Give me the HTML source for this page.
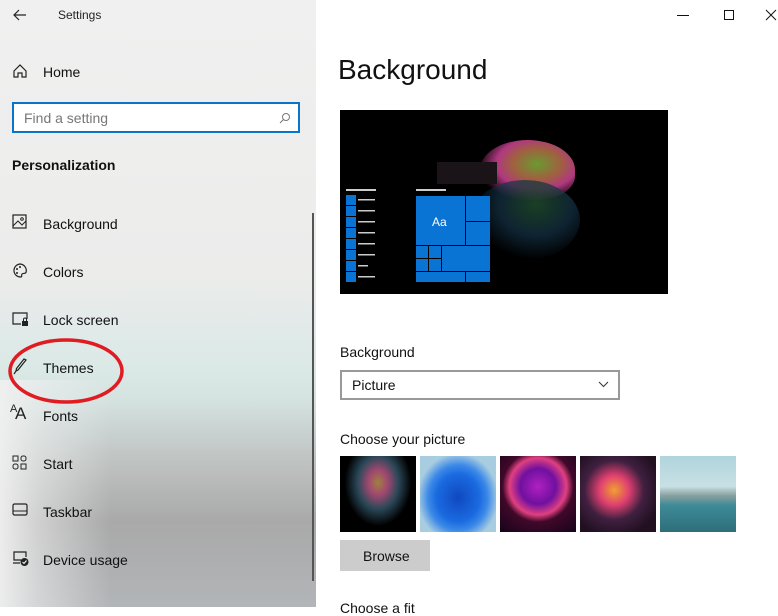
<!DOCTYPE html>
<html><head><style>
*{margin:0;padding:0;box-sizing:border-box}
body{width:778px;height:607px;overflow:hidden;font-family:"Liberation Sans",sans-serif;background:#fff;position:relative;color:#000}
.abs{position:absolute}
#left{left:0;top:0;width:316px;height:607px;overflow:hidden;
background:linear-gradient(180deg,#f0f0f0 0%,#ececeb 45%,#dbe9e7 60%,#d4e2e0 66%,#bfc3c2 76%,#a9a9a9 86%,#b2b5b8 100%)}
#leftov{left:0;top:380px;width:316px;height:227px;background:linear-gradient(90deg,rgba(240,240,240,.95) 0%,rgba(240,240,240,.55) 12%,rgba(240,240,240,0) 35%)}
.nav{position:absolute;left:43px;font-size:14px;color:#111}
.ic{position:absolute;left:12px}
.t{font-size:14px;color:#111}
</style></head><body>
<div id="left" class="abs">
<div id="leftov" class="abs"></div>
<svg class="abs" style="left:12px;top:8px" width="16" height="14"><path d="M14 7H2M7 2L2 7l5 5" stroke="#222" fill="none" stroke-width="1.2"/></svg>
<div class="abs" style="left:58px;top:8px;font-size:12px;color:#222">Settings</div>
<svg class="ic" style="top:63px" width="16" height="16"><path d="M2 8L8 2l6 6v6h-4V10H6v4H2z" stroke="#222" fill="none" stroke-width="1.2"/></svg>
<div class="nav" style="top:64px">Home</div>
<div class="abs" style="left:12px;top:102px;width:288px;height:31px;background:#fff;border:2px solid #0a74c8"></div>
<div class="abs" style="left:24px;top:110px;font-size:14px;color:#777">Find a setting</div>
<svg class="abs" style="left:279px;top:112px" width="12" height="12"><circle cx="7" cy="5" r="3.5" stroke="#777" fill="none"/><path d="M4.5 7.5L1 11" stroke="#777"/></svg>
<div class="abs" style="left:12px;top:157px;font-size:14px;font-weight:bold;color:#111">Personalization</div>
<svg class="ic" style="top:214px" width="16" height="16"><rect x="1" y="1" width="13" height="13" stroke="#222" fill="none" stroke-width="1.2"/><path d="M1 12l5-5 4 4 4-4" stroke="#222" fill="none"/><circle cx="10" cy="5" r="1.3" stroke="#222" fill="none"/></svg>
<div class="nav" style="top:216px">Background</div>
<svg class="ic" style="top:262px" width="17" height="17"><path d="M8 2a6.5 6.5 0 1 0 1 13c1.5-.5 0-2 1-3s3 0 4-1.5A6.6 6.6 0 0 0 8 2z" stroke="#222" fill="none" stroke-width="1.2"/><circle cx="5" cy="7" r="1" fill="#222"/><circle cx="8" cy="5" r="1" fill="#222"/><circle cx="5" cy="11" r="1" fill="#222"/></svg>
<div class="nav" style="top:264px">Colors</div>
<svg class="ic" style="top:311px" width="17" height="16"><path d="M9 13H1V2h14v6" stroke="#222" fill="none" stroke-width="1.2"/><rect x="10" y="10" width="6" height="5" fill="#222"/><path d="M11.5 10V8.5a1.5 1.5 0 0 1 3 0V10" stroke="#222" fill="none"/></svg>
<div class="nav" style="top:312px">Lock screen</div>
<svg class="ic" style="top:358px" width="16" height="18"><path d="M14 2L6 12l-2 1 .5-2.5L12 1z M4 13l-2 3" stroke="#222" fill="none" stroke-width="1.2"/></svg>
<div class="nav" style="top:360px">Themes</div>
<div class="abs" style="left:10px;top:403px;font-size:11px;color:#222">A</div>
<div class="abs" style="left:15px;top:404px;font-size:17px;color:#222">A</div>
<div class="nav" style="top:408px">Fonts</div>
<svg class="ic" style="top:455px" width="16" height="16"><rect x="1" y="1" width="5" height="5" stroke="#222" fill="none"/><rect x="9" y="1" width="5" height="5" rx="2" stroke="#222" fill="none"/><rect x="1" y="9" width="5" height="5" rx="2" stroke="#222" fill="none"/><rect x="9" y="9" width="5" height="5" stroke="#222" fill="none"/></svg>
<div class="nav" style="top:456px">Start</div>
<svg class="ic" style="top:503px" width="16" height="14"><rect x="1" y="1" width="14" height="11" rx="1.5" stroke="#222" fill="none" stroke-width="1.2"/><path d="M1 8h14" stroke="#222"/></svg>
<div class="nav" style="top:504px">Taskbar</div>
<svg class="ic" style="top:550px" width="17" height="17"><path d="M9 10H2V2h12v5M1 13h7" stroke="#222" fill="none" stroke-width="1.2"/><circle cx="12.5" cy="12" r="4" fill="#222"/><path d="M10.5 12l1.5 1.5 2.5-3" stroke="#fff" fill="none"/></svg>
<div class="nav" style="top:552px">Device usage</div>
<div class="abs" style="left:312px;top:213px;width:2px;height:368px;background:#555"></div>
<svg class="abs" style="left:4px;top:336px" width="120" height="70"><ellipse cx="62" cy="35" rx="56" ry="31" stroke="#e01b22" stroke-width="3.5" fill="none"/></svg>
</div>

<svg class="abs" style="left:677px;top:9px" width="101" height="12"><path d="M0 6.5h12" stroke="#111"/><rect x="47.5" y="1.5" width="9" height="9" stroke="#111" fill="none"/><path d="M89 1l10 10M99 1L89 11" stroke="#111"/></svg>
<div class="abs" style="left:338px;top:54px;font-size:28px;color:#111">Background</div>

<div class="abs" style="left:340px;top:110px;width:328px;height:184px;background:#000;overflow:hidden">
 <div class="abs" style="left:140px;top:30px;width:95px;height:60px;border-radius:50% 50% 40% 40%;background:radial-gradient(ellipse at 60% 40%,#6a9a30 0%,#a06040 30%,#b03880 50%,rgba(40,20,40,0) 75%)"></div>
 <div class="abs" style="left:130px;top:70px;width:110px;height:80px;border-radius:50%;background:radial-gradient(ellipse at 60% 30%,rgba(30,70,40,.9) 0%,rgba(20,50,70,.7) 40%,rgba(0,0,0,0) 70%)"></div>
 <div class="abs" style="left:97px;top:52px;width:60px;height:22px;background:#1a1418"></div>
 <div class="abs" style="left:6px;top:79px;width:30px;height:2px;background:#ccc"></div>
 <div class="abs" style="left:76px;top:79px;width:30px;height:2px;background:#ccc"></div>
</div>
<div class="abs" style="left:346px;top:195px">
 <svg width="30" height="88"><g fill="#0a74d4"><rect x="0" y="0" width="10" height="10"/><rect x="0" y="11" width="10" height="10"/><rect x="0" y="22" width="10" height="10"/><rect x="0" y="33" width="10" height="10"/><rect x="0" y="44" width="10" height="10"/><rect x="0" y="55" width="10" height="10"/><rect x="0" y="66" width="10" height="10"/><rect x="0" y="77" width="10" height="10"/></g><g fill="#ccc"><rect x="12" y="4" width="17" height="1.5"/><rect x="12" y="15" width="17" height="1.5"/><rect x="12" y="26" width="17" height="1.5"/><rect x="12" y="37" width="17" height="1.5"/><rect x="12" y="48" width="17" height="1.5"/><rect x="12" y="59" width="17" height="1.5"/><rect x="12" y="70" width="10" height="1.5"/><rect x="12" y="81" width="17" height="1.5"/></g></svg>
</div>
<svg class="abs" style="left:416px;top:196px" width="75" height="87"><g fill="#0a74d4"><rect x="0" y="0" width="49" height="49"/><rect x="50" y="0" width="24" height="25"/><rect x="50" y="26" width="24" height="23"/><rect x="0" y="50" width="12" height="12"/><rect x="13" y="50" width="12" height="12"/><rect x="0" y="63" width="12" height="12"/><rect x="13" y="63" width="12" height="12"/><rect x="26" y="50" width="48" height="25"/><rect x="0" y="76" width="49" height="10"/><rect x="50" y="76" width="24" height="10"/></g></svg>
<div class="abs" style="left:432px;top:215px;font-size:12px;color:#fff">Aa</div>

<div class="abs t" style="left:340px;top:344px">Background</div>
<div class="abs" style="left:340px;top:370px;width:280px;height:30px;border:2px solid #999;background:#fff"></div>
<div class="abs t" style="left:352px;top:377px">Picture</div>
<svg class="abs" style="left:598px;top:381px" width="11" height="7"><path d="M1 1l4.5 4.5L10 1" stroke="#333" fill="none"/></svg>
<div class="abs t" style="left:340px;top:431px">Choose your picture</div>
<div class="abs" style="left:340px;top:456px;width:76px;height:76px;background:radial-gradient(ellipse at 50% 35%,#a08040 0%,#a04870 18%,#2a4858 38%,#000 62%)"></div>
<div class="abs" style="left:420px;top:456px;width:76px;height:76px;background:radial-gradient(ellipse at 50% 55%,#1048c0 0%,#1a6ae0 40%,#3a88e8 55%,#a8cce0 75%)"></div>
<div class="abs" style="left:500px;top:456px;width:76px;height:76px;background:radial-gradient(circle at 50% 40%,#b020c0 0%,#7010a0 30%,#e04080 48%,#40082a 60%,#150418 100%)"></div>
<div class="abs" style="left:580px;top:456px;width:76px;height:76px;background:radial-gradient(ellipse at 45% 45%,#f0a030 0%,#e04070 25%,#402040 50%,#201020 80%)"></div>
<div class="abs" style="left:660px;top:456px;width:76px;height:76px;background:linear-gradient(180deg,#b0d4dc 0%,#c8e0e4 40%,#8aa0a0 52%,#3e8a98 65%,#2e6e7a 100%)"></div>
<div class="abs" style="left:340px;top:540px;width:90px;height:31px;background:#cccccc"></div>
<div class="abs t" style="left:363px;top:548px">Browse</div>
<div class="abs t" style="left:340px;top:600px">Choose a fit</div>
</body></html>
